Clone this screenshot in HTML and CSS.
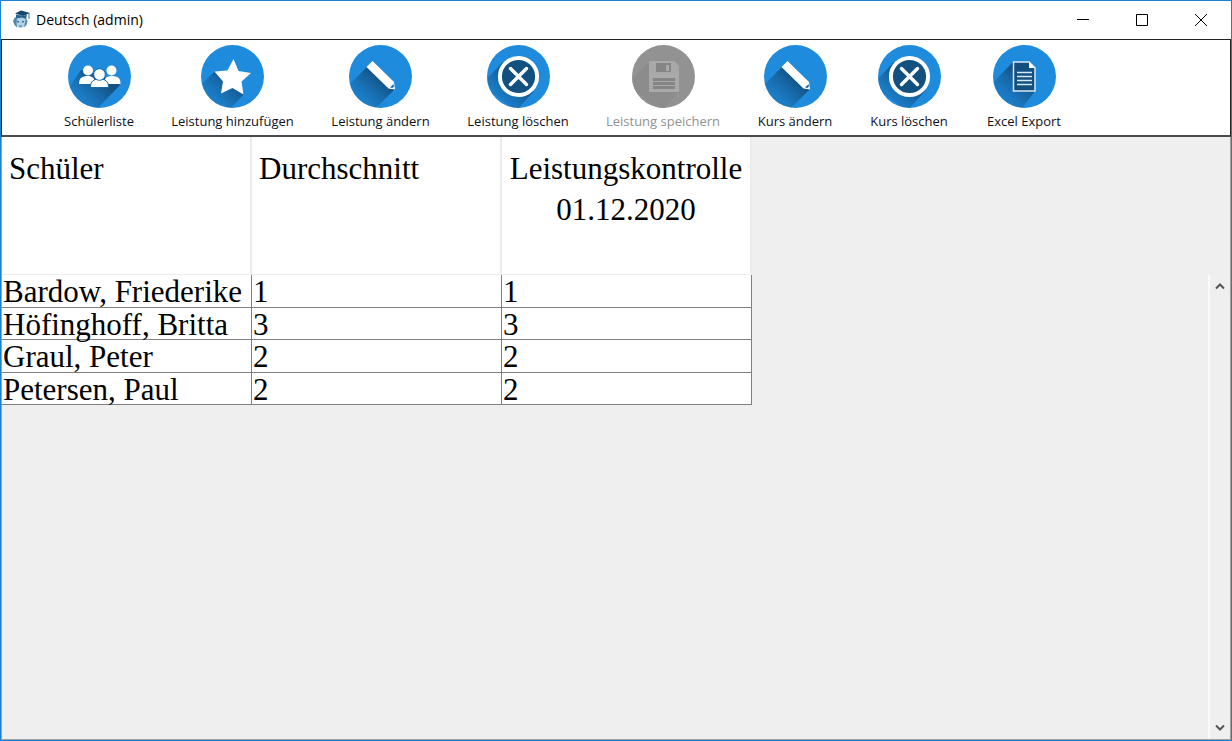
FILE: index.html
```html
<!DOCTYPE html>
<html lang="de">
<head>
<meta charset="utf-8">
<title>Deutsch (admin)</title>
<link rel="stylesheet" href="styles.css">
</head>
<body>
<svg class="defs" aria-hidden="true">
  <defs>
    <linearGradient id="shade" gradientUnits="userSpaceOnUse" x1="34" y1="32" x2="14" y2="54">
      <stop offset="0" stop-color="#10436d" stop-opacity=".85"/>
      <stop offset="1" stop-color="#145a92" stop-opacity=".3"/>
    </linearGradient>
    <clipPath id="disc"><circle cx="31.500" cy="31.500" r="31.500"/></clipPath>
    <symbol id="pencil" viewBox="0 0 63 63">
      <g clip-path="url(#disc)">
        <rect width="63" height="63" fill="#1e8bdd"/>
        <path d="M18 22 L40 43 L46 44 L24 66 L-6 46Z" fill="url(#shade)"/>
      </g>
      <path d="M23.500 16 L45 37 L46 44.500 L39.500 43.500 L17.500 22Z" fill="#fff"/>
      <path d="M41 42.500 L44.500 39 L45 41.500 L43.500 43Z" fill="#1c70ad"/>
    </symbol>
    <symbol id="cross" viewBox="0 0 63 63">
      <g clip-path="url(#disc)">
        <rect width="63" height="63" fill="#1e8bdd"/>
        <path d="M16 17 L47 46 L29 66 L-6 40Z" fill="url(#shade)"/>
      </g>
      <circle cx="31.500" cy="31.500" r="18.600" fill="#11507f" stroke="#fff" stroke-width="4"/>
      <path d="M23.500 23.500 L39.500 39.500 M39.500 23.500 L23.500 39.500" stroke="#fff" stroke-width="3.400" stroke-linecap="round"/>
    </symbol>
  </defs>
</svg>

<div class="window">
  <header class="titlebar">
    <svg class="app-icon" viewBox="0 0 20 20" aria-hidden="true">
      <circle cx="8.500" cy="11.500" r="6.500" fill="#b4d3e5"/>
      <path d="M3 7 L1 11 L2.500 15 L5 17.500 L4.500 13 L5 9Z M14 8 L15.500 11 L14.500 15 L12 17.500 L13 13Z" fill="#4e88ad"/>
      <path d="M5 11h2v1.500H5z M10 11h2v1.500h-2z M7 15.500h3v1H7z" fill="#3f7294"/>
      <path d="M3 3.500 L9 .500 L18 3 L11 6Z" fill="#184668"/>
      <path d="M4 4.500 L11 6 L15 4.500 L14 9 L10 7.500 L4 8.500Z" fill="#28638b"/>
      <path d="M17 3v6" stroke="#3b6e91"/>
    </svg>
    <h1 class="title">Deutsch (admin)</h1>
    <div class="window-controls">
      <button class="control" type="button" aria-label="Minimieren"><svg viewBox="0 0 12 12"><path d="M0 5.500h12"/></svg></button>
      <button class="control" type="button" aria-label="Maximieren"><svg viewBox="0 0 12 12"><path d="M.5.500h11v11H.5z"/></svg></button>
      <button class="control" type="button" aria-label="Schließen"><svg viewBox="0 0 12 12"><path d="M0 0l12 12M12 0L0 12"/></svg></button>
    </div>
  </header>

  <nav class="toolbar" aria-label="Werkzeuge">
    <button class="tool" type="button">
      <svg class="tool-icon" viewBox="0 0 63 63" aria-hidden="true">
        <g clip-path="url(#disc)">
          <rect width="63" height="63" fill="#1e8bdd"/>
          <path d="M13 25 L32 30 L52 40 L27 66 L-3 48Z" fill="url(#shade)"/>
        </g>
        <g fill="#fff">
          <circle cx="20" cy="25.500" r="5"/>
          <path d="M11 39 C11 33 14 31 20 31 C24 31 27 33 27 39Z"/>
          <circle cx="43.500" cy="25.500" r="5"/>
          <path d="M36 39 C36 33 39 31 43.500 31 C50 31 52.500 33 52.500 39Z"/>
        </g>
        <g fill="#fff" stroke="#19679f" stroke-width="1">
          <path d="M22.500 42.500 C22.500 36 26 34 31.500 34 C37 34 40.500 36 40.500 42.500Z"/>
          <circle cx="31.500" cy="29.500" r="5.800"/>
        </g>
      </svg>
      <span>Schülerliste</span>
    </button>
    <button class="tool" type="button">
      <svg class="tool-icon" viewBox="0 0 63 63" aria-hidden="true">
        <g clip-path="url(#disc)">
          <rect width="63" height="63" fill="#1e8bdd"/>
          <path d="M14 26 L34 30 L43 49 L27 66 L-6 46Z" fill="url(#shade)"/>
        </g>
        <path d="M32.500 14 L37.500 26 L50 28 L40.500 36.500 L42.500 49.500 L31.500 43 L20 48.500 L22 36.500 L13.500 26.500 L26.500 25.500Z" fill="#fff"/>
      </svg>
      <span>Leistung hinzufügen</span>
    </button>
    <button class="tool" type="button">
      <svg class="tool-icon" aria-hidden="true"><use href="#pencil"/></svg>
      <span>Leistung ändern</span>
    </button>
    <button class="tool" type="button">
      <svg class="tool-icon" aria-hidden="true"><use href="#cross"/></svg>
      <span>Leistung löschen</span>
    </button>
    <button class="tool" type="button" disabled>
      <svg class="tool-icon" viewBox="0 0 63 63" aria-hidden="true">
        <g clip-path="url(#disc)">
          <rect width="63" height="63" fill="#929292"/>
          <path d="M17 17 L47 46 L30 66 L-6 40Z" fill="#8c8c8c"/>
        </g>
        <path d="M17 16h25l5 5v26H17z" fill="#a9a9a9"/>
        <path d="M24 18h15v9H24z M21 33h22v11H21z" fill="#858585"/>
        <path d="M34 20h3v6h-3z" fill="#a9a9a9"/>
        <path d="M21 36.500h22M21 40.500h22" stroke="#a9a9a9"/>
      </svg>
      <span>Leistung speichern</span>
    </button>
    <button class="tool" type="button">
      <svg class="tool-icon" aria-hidden="true"><use href="#pencil"/></svg>
      <span>Kurs ändern</span>
    </button>
    <button class="tool" type="button">
      <svg class="tool-icon" aria-hidden="true"><use href="#cross"/></svg>
      <span>Kurs löschen</span>
    </button>
    <button class="tool" type="button">
      <svg class="tool-icon" viewBox="0 0 63 63" aria-hidden="true">
        <g clip-path="url(#disc)">
          <rect width="63" height="63" fill="#1e8bdd"/>
          <path d="M20 17 L42 46 L27 66 L-6 44Z" fill="url(#shade)"/>
        </g>
        <path d="M20.500 17h15.500l6 6v23H20.500z" fill="#11507f" stroke="#d8e8f4" stroke-width="1.500"/>
        <path d="M36 16.500v6.500h6.500z" fill="#fff"/>
        <path d="M24 27.500h15M24 31.500h15M24 35.500h15M24 39.500h15" stroke="#d8e8f4" stroke-width="1.500"/>
      </svg>
      <span>Excel Export</span>
    </button>
  </nav>

  <main class="content">
    <div class="grid-area">
      <table class="grades">
        <thead>
          <tr>
            <th scope="col">Schüler</th>
            <th scope="col">Durchschnitt</th>
            <th scope="col" class="exam">Leistungskontrolle<br>01.12.2020</th>
          </tr>
        </thead>
        <tbody>
          <tr><td>Bardow, Friederike</td><td>1</td><td>1</td></tr>
          <tr><td>Höfinghoff, Britta</td><td>3</td><td>3</td></tr>
          <tr><td>Graul, Peter</td><td>2</td><td>2</td></tr>
          <tr><td>Petersen, Paul</td><td>2</td><td>2</td></tr>
        </tbody>
      </table>
    </div>
    <div class="scrollbar">
      <button class="scroll-button" type="button" aria-label="Nach oben"><svg viewBox="0 0 10 8"><path d="M1 6.500L5 2.500L9 6.500"/></svg></button>
      <button class="scroll-button" type="button" aria-label="Nach unten"><svg viewBox="0 0 10 8"><path d="M1 1.500L5 5.500L9 1.500"/></svg></button>
    </div>
  </main>
</div>
</body>
</html>
```
FILE: styles.css
```css
* {
  box-sizing: border-box;
}

body {
  margin: 0;
}

button {
  margin: 0;
  padding: 0;
  border: 0;
  background: transparent;
  color: inherit;
  font: inherit;
}

.defs {
  position: absolute;
  width: 0;
  height: 0;
}

.window {
  display: flex;
  flex-direction: column;
  min-height: 100vh;
  border: 1px solid #1a80d2;
  background: #fff;
}

.titlebar {
  display: flex;
  align-items: center;
  height: 38px;
  padding: 0 1px 0 11px;
}

.app-icon {
  width: 20px;
  height: 20px;
}

.title {
  margin: 0 0 0 4px;
  color: #000;
  font: 400 14px/20px "Open Sans", "Noto Sans", sans-serif;
}

.window-controls {
  display: flex;
  align-self: stretch;
  margin-left: auto;
}

.control {
  display: flex;
  align-items: center;
  justify-content: center;
  width: 59px;
}

.control svg {
  width: 12px;
  height: 12px;
  fill: none;
  stroke: #000;
}

.toolbar {
  display: grid;
  grid-template-columns: 68px 121px 97px 100px 112px 74px 76px 76px;
  column-gap: 39px;
  height: 98px;
  padding: 5px 0 0 63px;
  border: 1px solid #222;
  border-bottom: 2px solid #4a4a50;
  color: #101018;
  font: 13px/16px "Open Sans", "Noto Sans", sans-serif;
}

.tool {
  display: flex;
  flex-direction: column;
  align-items: center;
  gap: 5px;
  white-space: nowrap;
}

.tool:disabled {
  color: #929292;
}

.tool-icon {
  flex: none;
  width: 63px;
  height: 63px;
}

.content {
  display: flex;
  flex: 1;
  border: 1px solid #a0a0a0;
  border-top: 0;
  background: #efefef;
}

.grid-area {
  flex: 1;
}

.grades {
  width: 750px;
  border-spacing: 0;
  table-layout: fixed;
  background: #fff;
  color: #000;
  font: 31px/31px "Liberation Serif", "Times New Roman", serif;
}

.grades th {
  height: 138px;
  padding: 11px 7px;
  border-right: 2px solid #ececec;
  border-bottom: 1px solid #ececec;
  font-weight: 400;
  line-height: 41px;
  text-align: left;
  vertical-align: top;
  white-space: nowrap;
}

.grades .exam {
  padding: 11px 6px;
  text-align: center;
}

.grades td {
  height: 33px;
  padding: 2px 1px 0;
  border-right: 1px solid #808080;
  border-bottom: 1px solid #808080;
  line-height: 30px;
  vertical-align: top;
}

.grades tr:nth-child(even) td {
  height: 32px;
  line-height: 29px;
}

.scrollbar {
  display: flex;
  flex-direction: column;
  justify-content: space-between;
  width: 22px;
  margin-top: 138px;
  border-left: 2px solid #fafafa;
}

.scroll-button {
  display: flex;
  align-items: center;
  justify-content: center;
  height: 22px;
}

.scroll-button svg {
  width: 10px;
  height: 8px;
  fill: none;
  stroke: #555;
  stroke-width: 2;
}
```
